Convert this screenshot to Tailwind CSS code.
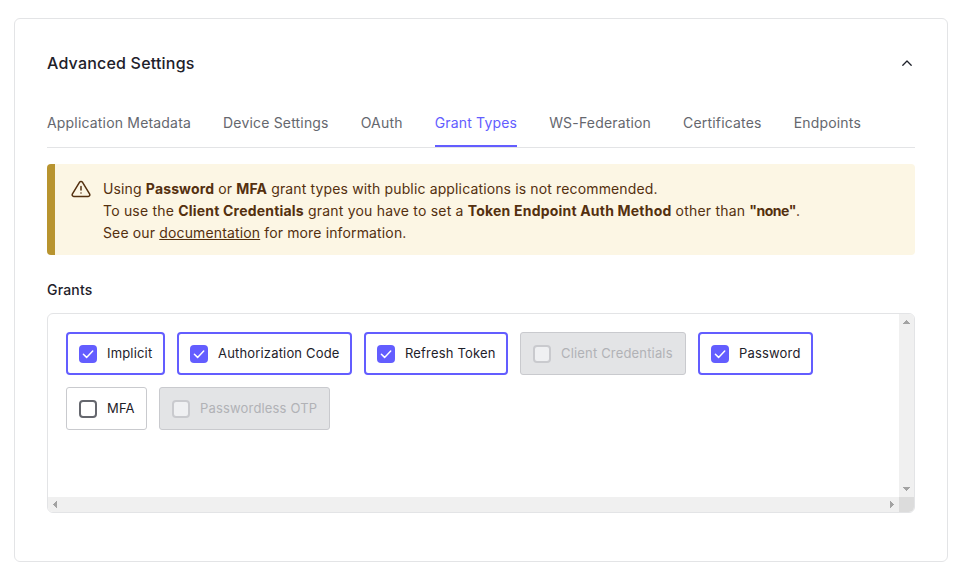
<!DOCTYPE html>
<html lang="en">
<head>
<meta charset="utf-8">
<title>Advanced Settings</title>
<script src="https://cdn.jsdelivr.net/npm/@tailwindcss/browser@4"></script>
</head>
<body class="bg-white font-['Inter',sans-serif] text-[#1e212a]">
<svg class="hidden">
  <symbol id="check" viewBox="0 0 18 18"><path d="M4.4 9.2 7.6 12.4 13.7 6.1" fill="none" stroke="#fff" stroke-width="1.5" stroke-linecap="round" stroke-linejoin="round"/></symbol>
</svg>
<main class="mt-[18px] ml-[14px] w-[934px] h-[544px] rounded-md border border-[#e3e4e6] px-8 pt-8">
  <header class="flex h-6 items-center justify-between">
    <h1 class="text-base font-medium tracking-[0.2px]">Advanced Settings</h1>
    <svg class="size-4" viewBox="0 0 16 16" fill="none" stroke="#1e212a" stroke-width="1.3" stroke-linecap="round" stroke-linejoin="round"><path d="M3.8 10.2 8 6 12.2 10.2"/></svg>
  </header>
  <nav class="mt-6 flex h-[49px] gap-8 border-b border-[#e3e4e6] pt-3.5 text-sm leading-5 tracking-[0.18px] text-[#65676e] whitespace-nowrap">
    <a>Application Metadata</a>
    <a>Device Settings</a>
    <a>OAuth</a>
    <a class="border-b-2 border-[#635dff] text-[#635dff]">Grant Types</a>
    <a>WS-Federation</a>
    <a>Certificates</a>
    <a>Endpoints</a>
  </nav>
  <section class="mt-4 flex h-[91px] gap-3 rounded border-l-8 border-[#b8942f] bg-[#fcf6e4] pt-3.5 pl-4 text-[#54300f]">
    <svg class="mt-[1px] size-5" viewBox="0 0 20 20" fill="none" stroke="#54300f" stroke-width="1.5" stroke-linecap="round" stroke-linejoin="round"><path d="M8.6 3.2 1.3 15.2a1.6 1.6 0 0 0 1.4 2.3h14.6a1.6 1.6 0 0 0 1.4-2.3L11.4 3.2a1.65 1.65 0 0 0-2.8 0ZM10 7.6v3.4M10 14v.1"/></svg>
    <p class="text-sm leading-[22px] tracking-[0.14px] whitespace-nowrap">Using <b class="font-bold">Password</b> or <b class="font-bold">MFA</b> grant types with public applications is not recommended.<br><span class="tracking-[0.2px]">To use the <b class="font-bold">Client Credentials</b> grant you have to set a <b class="font-bold">Token Endpoint Auth Method</b> other than <b class="font-bold tracking-[-0.5px]">"none"</b>.</span><br>See our <a class="underline">documentation</a> for more information.</p>
  </section>
  <h2 class="mt-[25px] text-sm leading-5 font-medium tracking-[0.2px]">Grants</h2>
  <section class="mt-[13px] grid h-[200px] grid-cols-[1fr_15px] grid-rows-[1fr_15px] overflow-hidden rounded-md border border-[#e3e4e6]">
    <div class="flex flex-wrap content-start gap-3 py-[18px] pl-[18px] text-[13px] tracking-[0.17px] whitespace-nowrap">
      <label class="flex h-[43px] w-[99px] items-center gap-2.5 rounded-[4px] border-2 border-[#635dff] pl-[11px]"><svg class="size-[18px] rounded bg-[#635dff]"><use href="#check"/></svg>Implicit</label>
      <label class="flex h-[43px] w-[175px] items-center gap-2.5 rounded-[4px] border-2 border-[#635dff] pl-[11px]"><svg class="size-[18px] rounded bg-[#635dff]"><use href="#check"/></svg>Authorization Code</label>
      <label class="flex h-[43px] w-[144px] items-center gap-2.5 rounded-[4px] border-2 border-[#635dff] pl-[11px]"><svg class="size-[18px] rounded bg-[#635dff]"><use href="#check"/></svg>Refresh Token</label>
      <label class="flex h-[43px] w-[166px] items-center gap-2.5 rounded-[3px] border border-[#c9cace] bg-[#e3e4e6] pl-3 text-[#b1b2b6]"><span class="size-[18px] rounded border-2 border-[#c9cace] bg-[#eff0f2]"></span>Client Credentials</label>
      <label class="flex h-[43px] w-[115px] items-center gap-2.5 rounded-[4px] border-2 border-[#635dff] pl-[11px]"><svg class="size-[18px] rounded bg-[#635dff]"><use href="#check"/></svg>Password</label>
      <label class="flex h-[43px] w-[81px] items-center gap-2.5 rounded-[3px] border border-[#c9cace] pl-3"><span class="size-[18px] rounded border-2 border-[#65676e]"></span>MFA</label>
      <label class="flex h-[43px] w-[171px] items-center gap-2.5 rounded-[3px] border border-[#c9cace] bg-[#e3e4e6] pl-3 text-[#b1b2b6]"><span class="size-[18px] rounded border-2 border-[#c9cace] bg-[#eff0f2]"></span>Passwordless OTP</label>
    </div>
    <div class="flex flex-col items-center justify-between bg-[#f0f0f0] py-[6px]">
      <svg class="h-1 w-[7px]" viewBox="0 0 7 4" shape-rendering="crispEdges" fill="#a3a3a3"><path d="M3 0h1v1h1v1h1v1h1v1H0V3h1V2h1V1h1Z"/></svg>
      <svg class="h-1 w-[7px]" viewBox="0 0 7 4" shape-rendering="crispEdges" fill="#a3a3a3"><path d="M0 0h7v1H6v1H5v1H4v1H3V3H2V2H1V1H0Z"/></svg>
    </div>
    <div class="flex items-center justify-between bg-[#f0f0f0] px-[5px]">
      <svg class="h-[7px] w-1" viewBox="0 0 4 7" shape-rendering="crispEdges" fill="#a3a3a3"><path d="M4 0v7H3V6H2V5H1V4H0V3h1V2h1V1h1V0Z"/></svg>
      <svg class="h-[7px] w-1" viewBox="0 0 4 7" shape-rendering="crispEdges" fill="#a3a3a3"><path d="M0 0h1v1h1v1h1v1h1v1H3v1H2v1H1v1H0Z"/></svg>
    </div>
    <div class="bg-[#dcdcdc]"></div>
  </section>
</main>
</body>
</html>
